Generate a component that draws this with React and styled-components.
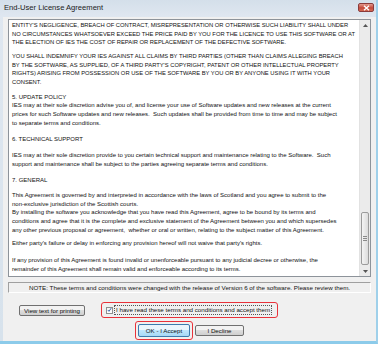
import styled, { createGlobalStyle } from "styled-components";

const GlobalStyle = createGlobalStyle`
  html, body {
    margin: 0;
    padding: 0;
    width: 378px;
    height: 344px;
    overflow: hidden;
    font-family: "Liberation Sans", Arial, sans-serif;
  }
`;

const paragraphs = [
  {
    gap: 0,
    caps: true,
    lines: [
      "ENTITY'S NEGLIGENCE, BREACH OF CONTRACT, MISREPRESENTATION OR OTHERWISE SUCH LIABILITY SHALL UNDER",
      "NO CIRCUMSTANCES WHATSOEVER EXCEED THE PRICE PAID BY YOU FOR THE LICENCE TO USE THIS SOFTWARE OR AT",
      "THE ELECTION OF IES THE COST OF REPAIR OR REPLACEMENT OF THE DEFECTIVE SOFTWARE.",
    ],
  },
  {
    gap: 5,
    caps: true,
    lines: [
      "YOU SHALL INDEMNIFY YOUR IES AGAINST ALL CLAIMS BY THIRD PARTIES (OTHER THAN CLAIMS ALLEGING BREACH",
      "BY THE SOFTWARE, AS SUPPLIED, OF A THIRD PARTY'S COPYRIGHT, PATENT OR OTHER INTELLECTUAL PROPERTY",
      "RIGHTS) ARISING FROM POSSESSION OR USE OF THE SOFTWARE BY YOU OR BY ANYONE USING IT WITH YOUR",
      "CONSENT.",
    ],
  },
  {
    gap: 6,
    lines: [
      "5. UPDATE POLICY",
      "IES may at their sole discretion advise you of, and license your use of Software updates and new releases at the current",
      "prices for such Software updates and new releases.  Such updates shall be provided from time to time and may be subject",
      "to separate terms and conditions.",
    ],
  },
  { gap: 8, lines: ["6. TECHNICAL SUPPORT"] },
  {
    gap: 7.4,
    lines: [
      "IES may at their sole discretion provide to you certain technical support and maintenance relating to the Software.  Such",
      "support and maintenance shall be subject to the parties agreeing separate terms and conditions.",
    ],
  },
  { gap: 7.4, lines: ["7. GENERAL"] },
  {
    gap: 6.4,
    lines: [
      "This Agreement is governed by and interpreted in accordance with the laws of Scotland and you agree to submit to the",
      "non-exclusive jurisdiction of the Scottish courts.",
      "By installing the software you acknowledge that you have read this Agreement, agree to be bound by its terms and",
      "conditions and agree that it is the complete and exclusive statement of the Agreement between you and which supersedes",
      "any other previous proposal or agreement,  whether or oral or written, relating to the subject matter of this Agreement.",
    ],
  },
  {
    gap: 5,
    lines: [
      "Either party's failure or delay in enforcing any provision hereof will not waive that party's rights.",
    ],
  },
  {
    gap: 8,
    lines: [
      "If any provision of this Agreement is found invalid or unenforceable pursuant to any judicial decree or otherwise, the",
      "remainder of this Agreement shall remain valid and enforceable according to its terms.",
    ],
  },
];

export default function App() {
  return (
    <>
      <GlobalStyle />
      <Window>
        <TitleBar>
          <Title>End-User License Agreement</Title>
          <CloseButton>
            <svg width="7" height="6" viewBox="0 0 7 6">
              <path d="M1 0.8 L6 5.2 M6 0.8 L1 5.2" stroke="#fff" strokeWidth="1.4" />
            </svg>
          </CloseButton>
        </TitleBar>
        <Client>
          <TextBox>
            <TextArea>
              {paragraphs.map((p, i) => (
                <Paragraph key={i} $gap={p.gap} $caps={p.caps}>
                  {p.lines.map((l, j) => (
                    <Line key={j}>{l}</Line>
                  ))}
                </Paragraph>
              ))}
            </TextArea>
            <ScrollBar>
              <Arrow>
                <svg width="5" height="3" viewBox="0 0 5 3">
                  <path d="M0 3 L2.5 0 L5 3 Z" fill="#555" />
                </svg>
              </Arrow>
              <Track>
                <Thumb>
                  <Grip />
                  <Grip />
                  <Grip />
                </Thumb>
              </Track>
              <Arrow>
                <svg width="5" height="3" viewBox="0 0 5 3">
                  <path d="M0 0 L2.5 3 L5 0 Z" fill="#555" />
                </svg>
              </Arrow>
            </ScrollBar>
          </TextBox>
          <Note>
            NOTE: These terms and conditions were changed with the release of
            Version 6 of the software. Please review them.
          </Note>
          <ActionRow>
            <Button $w={66}>View text for printing</Button>
            <Highlight $pad="2px 5px 2px 4px">
              <CheckBox>
                <svg width="6" height="6" viewBox="0 0 6 6">
                  <path d="M1 3 L2.4 4.6 L5 0.8" stroke="#2a5aa8" strokeWidth="1.1" fill="none" />
                </svg>
              </CheckBox>
              <Label>I have read these terms and conditions and accept them</Label>
            </Highlight>
          </ActionRow>
          <ConfirmRow>
            <Highlight $pad="2px 2px">
              <Button $w={52} $default>
                OK - I Accept
              </Button>
            </Highlight>
            <Button $w={49}>I Decline</Button>
          </ConfirmRow>
        </Client>
      </Window>
    </>
  );
}

const Window = styled.div`
  width: 378px;
  height: 344px;
  box-sizing: border-box;
  display: flex;
  flex-direction: column;
  background: linear-gradient(#dfe7f0, #d7e2ec);
  border-bottom: 3px solid #8ccbea;
  border-right: 2px solid #9fd0ea;
`;

const TitleBar = styled.div`
  height: 17px;
  display: flex;
  align-items: flex-start;
  justify-content: space-between;
  padding: 0 2px 0 4px;
  background: linear-gradient(#d4dfea, #dfe7f0);
`;

const Title = styled.div`
  font-family: "Liberation Sans", Arial, sans-serif;
  font-size: 7.6px;
  color: #1b1b1b;
  line-height: 16px;
`;

const CloseButton = styled.div`
  margin-top: 3px;
  width: 16px;
  height: 9px;
  border-radius: 2px;
  border: 1px solid #8a3b3b;
  box-sizing: border-box;
  background: linear-gradient(#e49a8e, #c4493a 55%, #d46a55);
  display: flex;
  align-items: center;
  justify-content: center;
`;

const Client = styled.div`
  flex: 1;
  margin: 0 0 0 3px;
  background: #f0f0f0;
  display: flex;
  flex-direction: column;
  padding: 2px 0 0 5px;
`;

const TextBox = styled.div`
  width: 363px;
  height: 258px;
  box-sizing: border-box;
  border: 1px solid #8d939a;
  background: #fff;
  display: flex;
`;

const TextArea = styled.div`
  flex: 1;
  padding: 1px 0 0 3px;
  overflow: hidden;
  line-height: 8.65px;
  color: #111;
`;

const Paragraph = styled.div`
  margin-top: ${(p) => p.$gap}px;
  font-size: ${(p) => (p.$caps ? "5.8px" : "6px")};
`;

const Line = styled.div`
  white-space: pre;
`;

const ScrollBar = styled.div`
  width: 10px;
  display: flex;
  flex-direction: column;
  background: #ebebeb;
  border-left: 1px solid #e2e2e2;
`;

const Arrow = styled.div`
  height: 10px;
  display: flex;
  align-items: center;
  justify-content: center;
`;

const Track = styled.div`
  flex: 1;
  display: flex;
  flex-direction: column;
  justify-content: flex-end;
  padding: 0 0 1px 0;
`;

const Thumb = styled.div`
  height: 53px;
  margin: 0 1px;
  box-sizing: border-box;
  border: 1px solid #9b9b9b;
  border-radius: 2px;
  background: linear-gradient(90deg, #f4f4f4, #dcdcdc);
  display: flex;
  flex-direction: column;
  align-items: center;
  justify-content: center;
  gap: 1px;
`;

const Grip = styled.div`
  width: 4px;
  height: 1px;
  background: #8a8a8a;
`;

const Note = styled.div`
  width: 363px;
  height: 11px;
  margin-top: 5px;
  box-sizing: border-box;
  border-top: 1px solid #a0a0a0;
  border-left: 1px solid #a0a0a0;
  border-bottom: 1px solid #fff;
  border-right: 1px solid #fff;
  font-size: 6.25px;
  line-height: 9px;
  text-align: center;
  color: #111;
  white-space: nowrap;
`;

const ActionRow = styled.div`
  display: flex;
  align-items: center;
  gap: 16px;
  margin-top: 9px;
  padding-left: 11px;
`;

const ConfirmRow = styled.div`
  display: flex;
  align-items: center;
  justify-content: center;
  gap: 2px;
  margin-top: 3px;
  padding-right: 5px;
`;

const Button = styled.div`
  width: ${(p) => p.$w}px;
  height: 11px;
  box-sizing: border-box;
  border: 1px solid ${(p) => (p.$default ? "#3d7bad" : "#707070")};
  border-radius: 2px;
  background: ${(p) =>
    p.$default
      ? "linear-gradient(#eaf6fd 45%, #bee6fd 50%, #a7d9f5)"
      : "linear-gradient(#f2f2f2 45%, #dddddd 50%, #cfcfcf)"};
  font-size: 6.2px;
  line-height: 9px;
  text-align: center;
  color: #111;
  white-space: nowrap;
  ${(p) => p.$default && "height: 13px; line-height: 11px;"}
`;

const Highlight = styled.div`
  display: flex;
  align-items: center;
  gap: 1px;
  padding: ${(p) => p.$pad};
  border: 1.5px solid #e8323a;
  border-radius: 3px;
`;

const CheckBox = styled.div`
  width: 7px;
  height: 7px;
  box-sizing: border-box;
  border: 1px solid #8e8f8f;
  background: linear-gradient(#f2f2f2, #ffffff);
  display: flex;
  align-items: center;
  justify-content: center;
`;

const Label = styled.div`
  font-size: 6.2px;
  line-height: 8px;
  padding: 0 1px;
  border: 1px dotted #555;
  color: #111;
  white-space: nowrap;
`;
